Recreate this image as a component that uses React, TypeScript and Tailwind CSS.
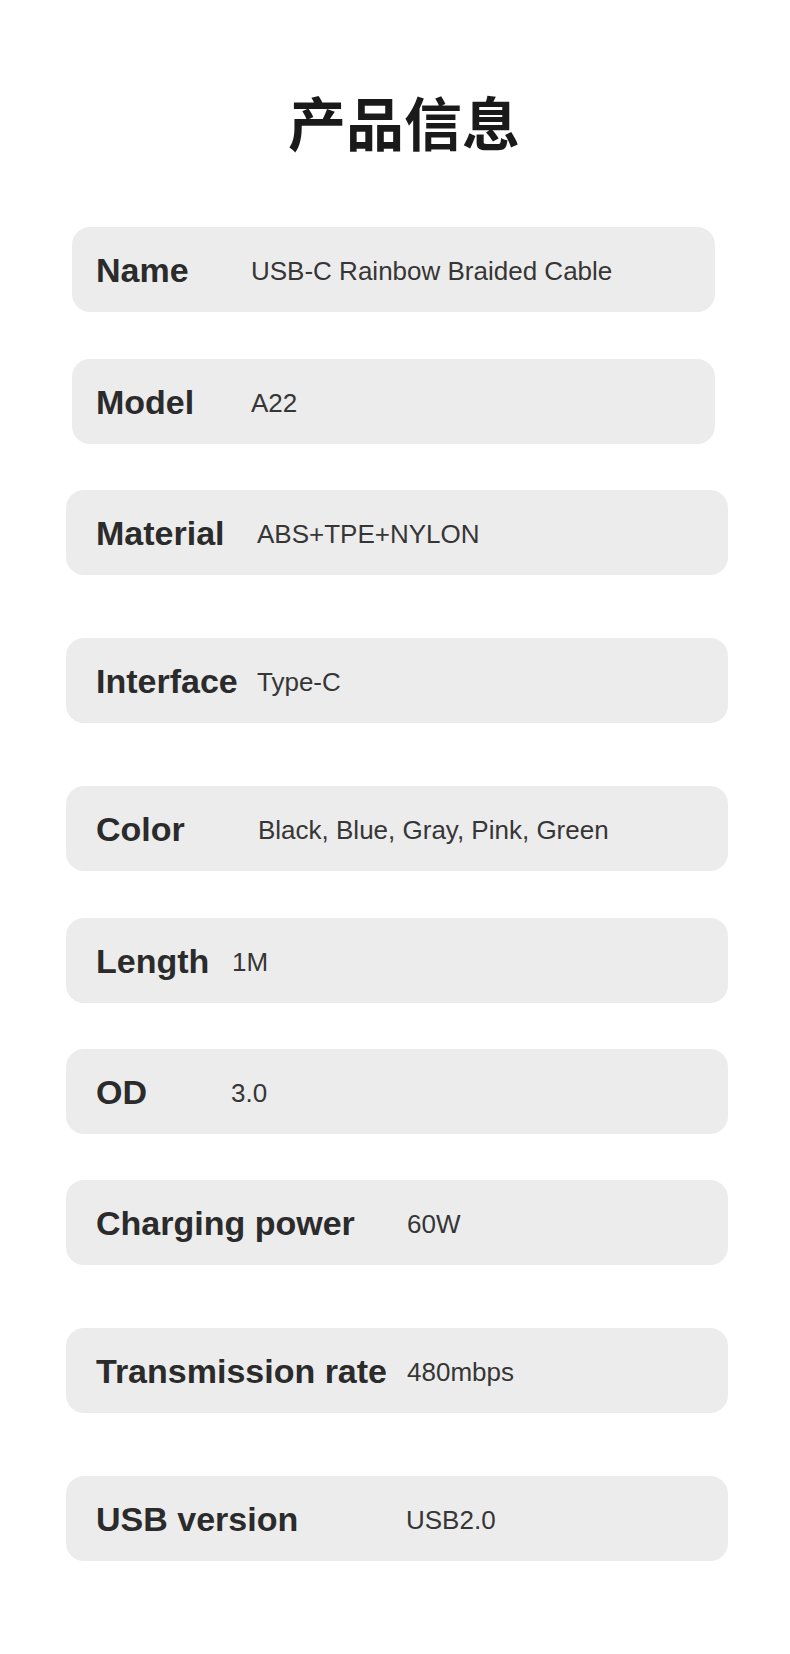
import React from "react";

type Row = { label: string; value: string; mt: string; labelW: string; narrow?: boolean };

const rows: Row[] = [
  { label: "Name", value: "USB-C Rainbow Braided Cable", mt: "mt-0", labelW: "w-[155px]", narrow: true },
  { label: "Model", value: "A22", mt: "mt-[47px]", labelW: "w-[155px]", narrow: true },
  { label: "Material", value: "ABS+TPE+NYLON", mt: "mt-[46px]", labelW: "w-[161px]" },
  { label: "Interface", value: "Type-C", mt: "mt-[63px]", labelW: "w-[161px]" },
  { label: "Color", value: "Black, Blue, Gray, Pink, Green", mt: "mt-[63px]", labelW: "w-[162px]" },
  { label: "Length", value: "1M", mt: "mt-[47px]", labelW: "w-[136px]" },
  { label: "OD", value: "3.0", mt: "mt-[46px]", labelW: "w-[135px]" },
  { label: "Charging power", value: "60W", mt: "mt-[46px]", labelW: "w-[311px]" },
  { label: "Transmission rate", value: "480mbps", mt: "mt-[63px]", labelW: "w-[311px]" },
  { label: "USB version", value: "USB2.0", mt: "mt-[63px]", labelW: "w-[310px]" },
];

export default function App() {
  return (
    <div
      className="w-[790px] h-[1654px] bg-white flex flex-col"
      style={{ fontFamily: '"Liberation Sans", Arial, sans-serif' }}
    >
      <h1
        className="pt-[83px] pl-[18px] text-center text-[58px] leading-[76px] font-bold text-[#1a1a1a]"
        style={{ fontFamily: '"Noto Sans CJK SC", sans-serif' }}
      >
        产品信息
      </h1>
      <div className="mt-[68px] flex flex-col">
        {rows.map((r) => (
          <div
            key={r.label}
            className={`${r.mt} ${
              r.narrow ? "ml-[72px] w-[643px] pl-[24px]" : "ml-[66px] w-[662px] pl-[30px]"
            } h-[85px] rounded-[18px] bg-[#ececec] flex items-center`}
          >
            <div className={`${r.labelW} shrink-0 text-[34px] font-bold text-[#2b2b2b] leading-none`}>
              {r.label}
            </div>
            <div className="text-[26px] text-[#363636] leading-none pt-[3px]">{r.value}</div>
          </div>
        ))}
      </div>
    </div>
  );
}
